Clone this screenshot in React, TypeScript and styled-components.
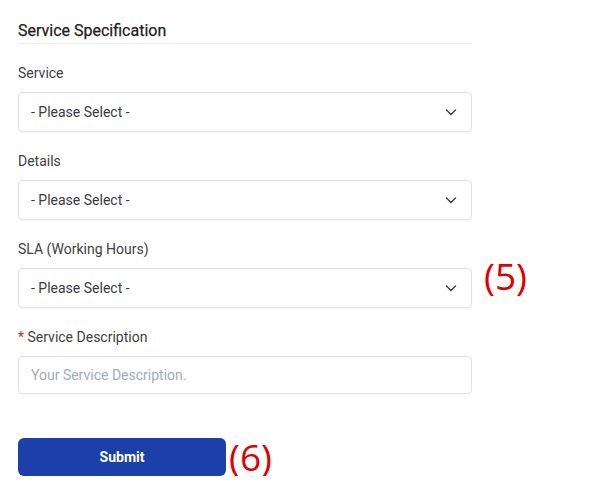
import React from 'react'
import styled, { createGlobalStyle } from 'styled-components'

const GlobalStyle = createGlobalStyle`
  body {
    margin: 0;
    background: #ffffff;
    font-family: Roboto, "Liberation Sans", Arial, sans-serif;
  }
`

const fields = [
  { label: 'Service' },
  { label: 'Details' },
  { label: 'SLA (Working Hours)', note: '(5)' },
]

const Chevron: React.FC = () => (
  <svg width="14" height="14" viewBox="0 0 14 14" fill="none">
    <path d="M2.5 5 L7 9.5 L11.5 5" stroke="#3f4046" strokeWidth="1.5" strokeLinecap="round" strokeLinejoin="round" />
  </svg>
)

const App: React.FC = () => {
  return (
    <>
      <GlobalStyle />
      <StyledForm>
        <StyledTitle>Service Specification</StyledTitle>
        {fields.map((f) => (
          <StyledField key={f.label}>
            <StyledLabel>{f.label}</StyledLabel>
            <StyledRow>
              <StyledSelect>
                <span>- Please Select -</span>
                <Chevron />
              </StyledSelect>
              {f.note ? <StyledNote>{f.note}</StyledNote> : null}
            </StyledRow>
          </StyledField>
        ))}
        <StyledField>
          <StyledLabel>
            <StyledRequired>*</StyledRequired> Service Description
          </StyledLabel>
          <StyledRow>
            <StyledInput placeholder="Your Service Description." />
          </StyledRow>
        </StyledField>
        <StyledActions>
          <StyledButton>Submit</StyledButton>
          <StyledNote $small>(6)</StyledNote>
        </StyledActions>
      </StyledForm>
    </>
  )
}

const StyledForm = styled.div`
  padding: 21px 0 0 18px;
  width: 560px;
  box-sizing: border-box;
`
const StyledTitle = styled.h3`
  width: 454px;
  margin: 0;
  padding-bottom: 3px;
  border-bottom: 1px solid #ececec;
  font-size: 16px;
  line-height: 19px;
  font-weight: 400;
  color: #1f2023;
  -webkit-text-stroke: 0.25px #1f2023;
`
const StyledField = styled.div`
  display: flex;
  flex-direction: column;
  margin-top: 20px;
`
const StyledLabel = styled.label`
  font-size: 14px;
  line-height: 18px;
  color: #3f4044;
  margin-bottom: 10px;
`
const StyledRequired = styled.span`
  color: #d92020;
`
const StyledRow = styled.div`
  display: flex;
  align-items: center;
`
const StyledSelect = styled.div`
  width: 454px;
  height: 40px;
  box-sizing: border-box;
  display: flex;
  align-items: center;
  justify-content: space-between;
  padding: 0 13px 0 12px;
  border: 1px solid #e3e3e3;
  border-radius: 4px;
  box-shadow: 0 1px 2px rgba(0, 0, 0, 0.05);
  font-size: 14px;
  color: #3a3b3f;
  background: #fff;
`
const StyledInput = styled.input`
  width: 454px;
  height: 38px;
  box-sizing: border-box;
  padding: 0 12px;
  border: 1px solid #e3e3e3;
  border-radius: 4px;
  box-shadow: 0 1px 2px rgba(0, 0, 0, 0.05);
  font-family: inherit;
  font-size: 14px;
  outline: none;
  &::placeholder {
    color: #a5abb6;
  }
`
const StyledNote = styled.span<{ $small?: boolean }>`
  margin-left: ${(p) => (p.$small ? '3px' : '12px')};
  margin-top: ${(p) => (p.$small ? '0' : '-24px')};
  font-family: "Open Sans", "Liberation Sans", sans-serif;
  font-size: 37px;
  line-height: 38px;
  color: #e00000;
`
const StyledActions = styled.div`
  display: flex;
  align-items: center;
  margin-top: 44px;
`
const StyledButton = styled.button`
  width: 208px;
  height: 38px;
  border: none;
  border-radius: 6px;
  background: #1c3faa;
  color: #fff;
  font-family: inherit;
  font-size: 14px;
  font-weight: 700;
  cursor: pointer;
`

export default App
